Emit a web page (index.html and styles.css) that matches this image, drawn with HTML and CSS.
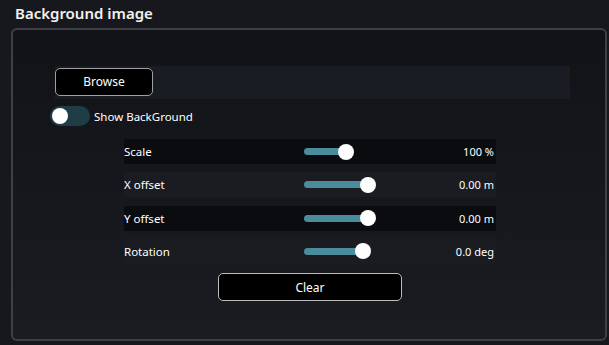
FILE: index.html
```html
<!DOCTYPE html>
<html lang="en">
<head>
    <meta charset="UTF-8">
    <meta name="viewport" content="width=device-width, initial-scale=1.0">
    <title>Background image</title>
    <link rel="stylesheet" href="styles.css">
</head>
<body>

    <h1 class="title">Background image</h1>

    <!-- Background image panel -->
    <div class="panel">
        <div class="browse-row">
            <button class="button browse-button">Browse</button>
        </div>

        <div class="toggle-row">
            <span class="toggle"><span class="toggle-knob"></span></span>
            <span class="toggle-label">Show BackGround</span>
        </div>

        <div class="settings">
            <div class="setting dark">
                <span class="setting-label">Scale</span>
                <span class="slider"><span class="slider-fill" style="width: 42px;"></span><span class="slider-thumb"></span></span>
                <span class="setting-value">100 %</span>
            </div>
            <div class="setting">
                <span class="setting-label">X offset</span>
                <span class="slider"><span class="slider-fill" style="width: 64px;"></span><span class="slider-thumb"></span></span>
                <span class="setting-value">0.00 m</span>
            </div>
            <div class="setting dark">
                <span class="setting-label">Y offset</span>
                <span class="slider"><span class="slider-fill" style="width: 64px;"></span><span class="slider-thumb"></span></span>
                <span class="setting-value">0.00 m</span>
            </div>
            <div class="setting">
                <span class="setting-label">Rotation</span>
                <span class="slider"><span class="slider-fill" style="width: 59px;"></span><span class="slider-thumb"></span></span>
                <span class="setting-value">0.0 deg</span>
            </div>
            <button class="button clear-button">Clear</button>
        </div>
    </div>

</body>
</html>
```

FILE: styles.css
```css
body {
    font-family: "Noto Sans", "Open Sans", sans-serif;
    background-color: #17181d;
    color: #fff;
    margin: 0;
    height: 345px;
    overflow: hidden;
}
.title {
    font-size: 15px;
    font-weight: 600;
    line-height: 20px;
    margin: 0;
    padding: 3px 0 5px 15px;
    color: #f2f2f2;
}
.panel {
    margin-left: 11px;
    width: 592px;
    height: 309px;
    border: 2px solid #3f4045;
    border-radius: 6px;
    background: linear-gradient(#121317, #1a1c22);
}
.button {
    background-color: #000;
    color: #fff;
    border: 1px solid #a0a0a0;
    border-radius: 5px;
    font-family: inherit;
    font-size: 12px;
    cursor: pointer;
    padding: 0;
}
.browse-row {
    margin: 36px 0 0 42px;
    width: 515px;
    height: 33px;
    background-color: #1a1c23;
    display: flex;
    align-items: center;
}
.browse-button {
    width: 98px;
    height: 28px;
    margin-top: -2px;
}
.toggle-row {
    display: flex;
    align-items: center;
    margin: 7px 0 0 37px;
    gap: 4px;
}
.toggle {
    width: 40px;
    height: 20px;
    border-radius: 10px;
    background-color: #1e3d47;
    display: flex;
    align-items: center;
}
.toggle-knob {
    width: 16px;
    height: 16px;
    border-radius: 50%;
    background-color: #fff;
    margin-left: 2px;
}
.toggle-label {
    font-size: 11.5px;
}
.settings {
    margin: 13px 0 0 111px;
    width: 372px;
    display: flex;
    flex-direction: column;
    gap: 8.3px;
}
.setting {
    display: flex;
    align-items: center;
    height: 25px;
    background-color: #1a1c22;
    font-size: 11.5px;
}
.setting.dark {
    background-color: #0b0c0f;
}
.setting-label {
    width: 180px;
}
.slider {
    display: flex;
    align-items: center;
    width: 80px;
}
.slider-fill {
    height: 7px;
    border-radius: 4px;
    background-color: #4a8b9c;
}
.slider-thumb {
    width: 16px;
    height: 16px;
    border-radius: 50%;
    background-color: #fff;
    margin-left: -8px;
}
.setting-value {
    flex: 1;
    text-align: right;
    padding-right: 2px;
    font-size: 11px;
}
.clear-button {
    align-self: center;
    width: 184px;
    height: 28px;
    margin-top: 1px;
    border-color: #bdbdbd;
}
```
